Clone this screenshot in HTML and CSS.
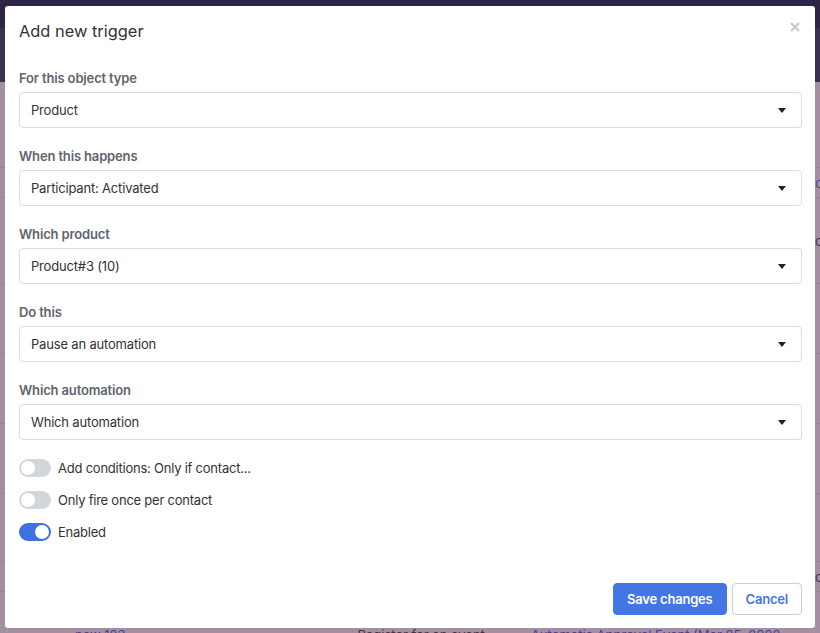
FILE: index.html
```html
<!DOCTYPE html>
<html lang="en">
<head>
<meta charset="utf-8">
<title>Add new trigger</title>
<link rel="stylesheet" href="styles.css">
</head>
<body>
<div class="page">
  <div class="topbar"></div>
  <div class="subbar"></div>
  <div class="rows">
    <div class="row r1"></div>
    <div class="row r2"><span class="frag link">ol</span></div>
    <div class="row r3"><span class="frag">or</span></div>
    <div class="row r4"></div>
    <div class="row r5"></div>
    <div class="row r6"></div>
    <div class="row r7"></div>
    <div class="row r8"><span class="frag">o</span></div>
    <div class="row last">
      <span class="cell c1 link">new 123</span>
      <span class="cell c2">Register for an event</span>
      <span class="cell c3 link">Automatic Approval Event (Mar 25, 2022...</span>
    </div>
  </div>
</div>

<div class="modal">
  <div class="modal-header">
    <h1 class="modal-title">Add new trigger</h1>
    <button class="close" aria-label="Close">
      <svg width="10" height="10" viewBox="0 0 10 10"><path d="M1 1 L9 9 M9 1 L1 9" stroke="#c9c9c9" stroke-width="2.4" stroke-linecap="butt"/></svg>
    </button>
  </div>
  <div class="modal-body">
    <div class="field">
      <label class="label">For this object type</label>
      <div class="select"><span>Product</span><i class="caret"></i></div>
    </div>
    <div class="field">
      <label class="label">When this happens</label>
      <div class="select"><span>Participant: Activated</span><i class="caret"></i></div>
    </div>
    <div class="field">
      <label class="label">Which product</label>
      <div class="select"><span>Product#3 (10)</span><i class="caret"></i></div>
    </div>
    <div class="field">
      <label class="label">Do this</label>
      <div class="select"><span>Pause an automation</span><i class="caret"></i></div>
    </div>
    <div class="field field-last">
      <label class="label">Which automation</label>
      <div class="select"><span>Which automation</span><i class="caret"></i></div>
    </div>
    <div class="toggles">
      <div class="toggle-row"><span class="switch"></span><span>Add conditions: Only if contact...</span></div>
      <div class="toggle-row"><span class="switch"></span><span>Only fire once per contact</span></div>
      <div class="toggle-row"><span class="switch on"></span><span>Enabled</span></div>
    </div>
  </div>
  <div class="modal-footer">
    <button class="btn btn-primary">Save changes</button>
    <button class="btn btn-outline">Cancel</button>
  </div>
</div>
</body>
</html>
```
FILE: styles.css
```css
* { box-sizing: border-box; }
html, body { margin: 0; padding: 0; }
body {
  width: 820px;
  height: 633px;
  overflow: hidden;
  font-family: Inter, "Noto Sans", "Liberation Sans", sans-serif;
  background: #a38ea2;
  position: relative;
}

/* background page behind the overlay */
.page { width: 820px; height: 633px; display: flex; flex-direction: column; }
.topbar { height: 28px; background: #2e2444; flex: none; }
.subbar { height: 54px; background: #3a304f; flex: none; }
.rows { flex: 1; display: flex; flex-direction: column; }
.row { border-bottom: 1px solid #978397; display: flex; align-items: center; flex: none; }
.r1 { height: 86px; }
.r2 { height: 30px; }
.r3 { height: 86px; }
.r4 { height: 70px; }
.r5 { height: 70px; }
.r6 { height: 70px; }
.r7 { height: 68px; }
.r8 { height: 30px; }
.row.last { border-bottom: none; flex: 1; align-items: flex-start; }
.frag { margin-left: 815px; font-size: 13px; line-height: 16px; color: #3e3548; white-space: nowrap; }
.link { color: #4b3f8e; }
.cell { font-size: 13px; line-height: 18px; color: #3e3548; position: relative; top: 34px; white-space: nowrap; }
.cell.link { color: #4b3f8e; }
.c1 { margin-left: 75px; }
.c2 { margin-left: 232px; }
.c3 { margin-left: 46px; }

/* modal */
.modal {
  position: absolute;
  left: 5px;
  top: 6px;
  width: 810px;
  height: 622px;
  background: #fff;
  border-radius: 3px;
  display: flex;
  flex-direction: column;
  color: #333;
}
.modal-header {
  display: flex;
  align-items: center;
  justify-content: space-between;
  padding: 14px 14px 0 14px;
}
.modal-title {
  margin: 0;
  font-size: 16.4px;
  line-height: 22px;
  font-weight: 400;
  color: #333;
}
.close {
  border: 0;
  background: none;
  padding: 0;
  width: 10px;
  height: 10px;
  margin-right: 1px;
  margin-top: -9px;
  display: block;
}
.close svg { display: block; }

.modal-body { padding: 28px 13px 0 14px; }
.field { margin-bottom: 20px; }
.field.field-last { margin-bottom: 18px; }
.label {
  display: block;
  font-size: 13px;
  letter-spacing: -0.15px;
  line-height: 16px;
  font-weight: 600;
  color: #60656e;
  margin-bottom: 6px;
}
.select {
  height: 36px;
  border: 1px solid #dcdce1;
  border-radius: 4px;
  display: flex;
  align-items: center;
  justify-content: space-between;
  padding: 0 15px 0 11px;
  font-size: 13px;
  letter-spacing: -0.18px;
  color: #333;
}
.caret {
  width: 0;
  height: 0;
  border-left: 4.5px solid transparent;
  border-right: 4.5px solid transparent;
  border-top: 5px solid #222;
}

.toggles { display: flex; flex-direction: column; gap: 12px; }
.toggle-row {
  display: flex;
  align-items: center;
  gap: 7px;
  height: 20px;
  font-size: 13px;
  letter-spacing: -0.23px;
  color: #333;
}
.switch {
  width: 32px;
  height: 18px;
  border-radius: 9px;
  background: #d3d6dc;
  position: relative;
  flex: none;
}
.switch::after {
  content: "";
  position: absolute;
  left: 2px;
  top: 2px;
  width: 14px;
  height: 14px;
  border-radius: 50%;
  background: #fff;
}
.switch.on { background: #3f72e0; }
.switch.on::after { left: 16px; }

.modal-footer {
  margin-top: auto;
  display: flex;
  justify-content: flex-end;
  gap: 5px;
  padding: 0 13px 13px 14px;
}
.btn {
  height: 32px;
  border-radius: 4px;
  font-family: inherit;
  font-size: 13px;
  letter-spacing: -0.2px;
  font-weight: 600;
  padding: 0 13px;
  cursor: pointer;
}
.btn-primary {
  background: #4176e4;
  border: 1px solid #4176e4;
  color: #fff;
}
.btn-outline {
  background: #fff;
  border: 1px solid #c9ced8;
  color: #4176e4;
}
```
